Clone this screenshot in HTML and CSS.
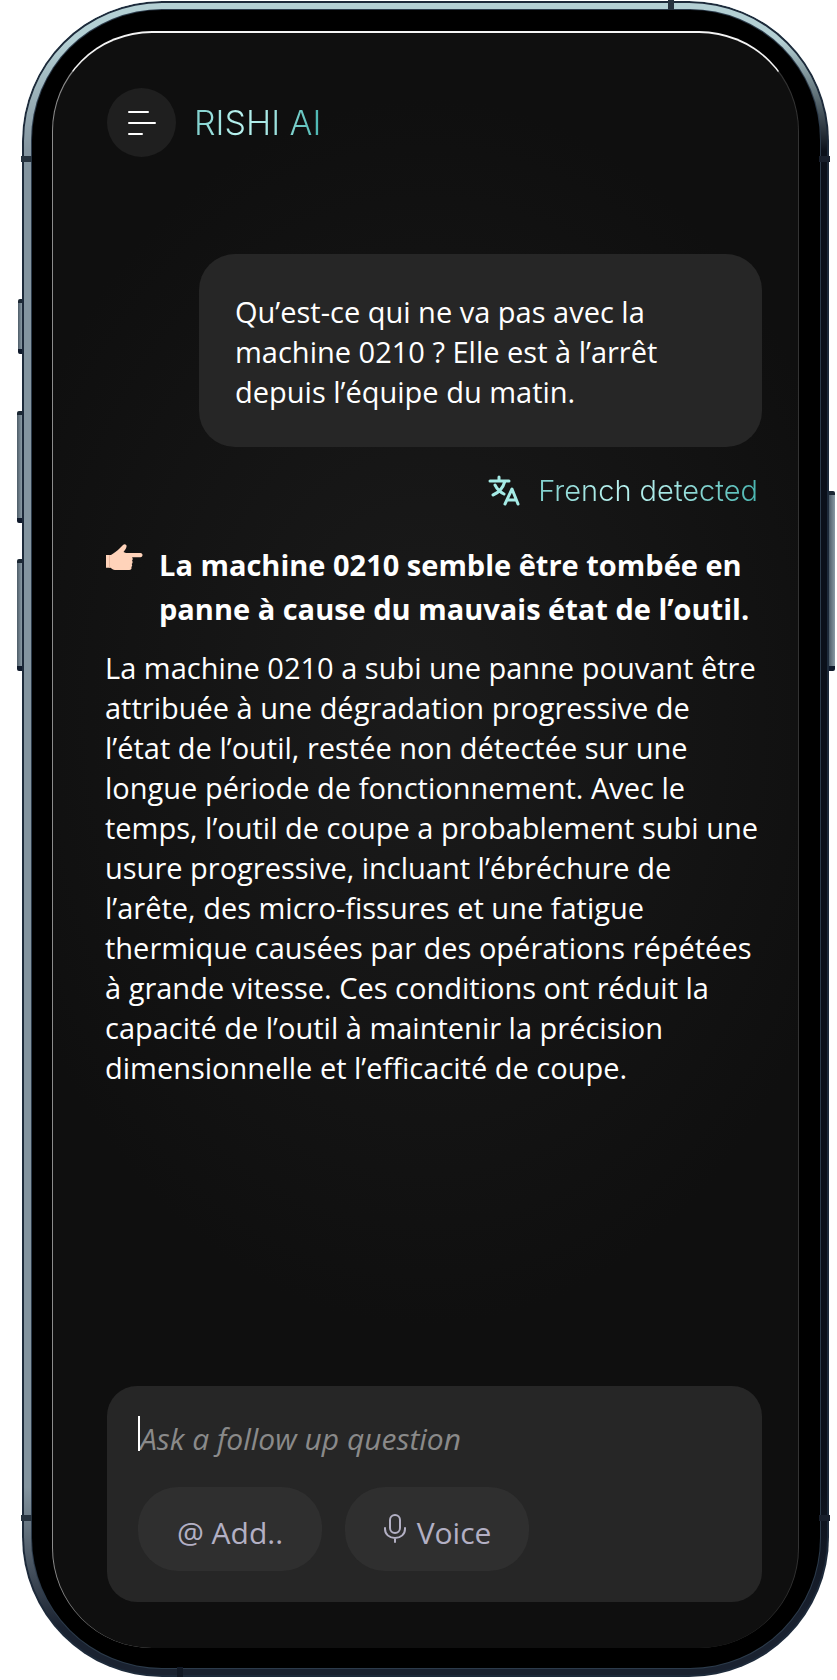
FILE: index.html
```html
<!DOCTYPE html>
<html lang="fr">
<head>
    <meta charset="UTF-8">
    <meta name="viewport" content="width=device-width, initial-scale=1.0">
    <title>Rishi AI</title>
    <link rel="stylesheet" href="styles.css">
</head>
<body>
    <div class="phone">
        <span class="key key-mute"></span>
        <span class="key key-up"></span>
        <span class="key key-down"></span>
        <span class="key key-power"></span>
        <span class="band band-top"></span>
        <span class="band band-bottom"></span>
        <span class="band band-left-top"></span>
        <span class="band band-left-bottom"></span>
        <span class="band band-right-top"></span>
        <span class="band band-right-bottom"></span>

        <div class="bezel">
            <div class="screen">
                <header class="header">
                    <button class="menu-btn" type="button" aria-label="Menu">
                        <svg width="28" height="26" viewBox="0 0 28 26" fill="none" stroke="#fff" stroke-width="2" stroke-linecap="round">
                            <path d="M1 2h19M1 13h26M1 24h13"/>
                        </svg>
                    </button>
                    <h1 class="brand">RISHI AI</h1>
                </header>

                <main class="chat">
                    <p class="question">Qu’est-ce qui ne va pas avec la machine 0210 ? Elle est à l’arrêt depuis l’équipe du matin.</p>

                    <div class="detected">
                        <svg width="32" height="32" viewBox="0 0 32 32" fill="none" stroke="#a5ebe6" stroke-width="3" stroke-linecap="round" stroke-linejoin="round">
                            <path d="M2 6h19M11 2v4M17 6C15 13 10 18 5 20M7 10c2 4 5 7 9 9"/>
                            <path d="M17 29l7-15 6 15M19 25h9"/>
                        </svg>
                        <span class="detected-text">French detected</span>
                    </div>

                    <div class="answer-head">
                        <svg class="hand" width="38" height="27" viewBox="0 0 38 27">
                            <path fill="#ffd3ba" d="M1 11h5C9 9 12 7 14 5L18 1c1.500-1.500 4-.5 3.500 1.800-.4 2-1.700 3.700-3 5.200L21 9h14.500c2.700 0 2.700 4.200 0 4.200H27c1 1 .9 2.500 0 3.400.9 1 .8 2.500-.3 3.400.8 1 .6 2.200-.4 3 .8 1.500-.3 3-2 3H10c-2 0-3-1.500-4.500-2.300H1z"/>
                            <path d="M4.500 11v12.500" stroke="#e9b79c" stroke-width="1"/>
                        </svg>
                        <h2 class="answer-title">La machine 0210 semble être tombée en panne à cause du mauvais état de l’outil.</h2>
                    </div>
                    <p class="answer">La machine 0210 a subi une panne pouvant être attribuée à une dégradation progressive de l’état de l’outil, restée non détectée sur une longue période de fonctionnement. Avec le temps, l’outil de coupe a probablement subi une usure progressive, incluant l’ébréchure de l’arête, des micro-fissures et une fatigue thermique causées par des opérations répétées à grande vitesse. Ces conditions ont réduit la capacité de l’outil à maintenir la précision dimensionnelle et l’efficacité de coupe.</p>
                </main>

                <form class="composer">
                    <div class="field">
                        <span class="caret"></span>
                        <input class="ask" type="text" placeholder="Ask a follow up question" aria-label="Ask a follow up question">
                    </div>
                    <div class="actions">
                        <button class="pill" type="button">@ Add..</button>
                        <button class="pill" type="button">
                            <svg class="mic" width="24" height="32" viewBox="0 0 24 32" fill="none" stroke="#b3b0c4" stroke-width="2" stroke-linecap="round">
                                <rect x="7" y="2" width="10" height="18" rx="5"/>
                                <path d="M2 15v1c0 5 4 9 10 9s10-4 10-9v-1M12 25v4"/>
                            </svg>
                            Voice
                        </button>
                    </div>
                </form>
            </div>
        </div>
    </div>
</body>
</html>
```

FILE: styles.css
```css
*{
    box-sizing: border-box;
}
body{
    margin: 0;
    padding: 1px 8px 3px 22px;
    background-color: white;
    color: white;
    font-family: "Open Sans", "Noto Sans", sans-serif;
    font-size: 29px;
    line-height: 40px;
}
h1, h2, p{
    margin: 0;
}
button, input{
    font: inherit;
    border: none;
    padding: 0;
}

/* phone body */
.phone{
    position: relative;
    display: flex;
    min-height: calc(100vh - 4px);
    padding: 9px 9px 9px 10px;
    border-radius: 140px;
    background: linear-gradient(to bottom, #b4d0d4 0, #b4d0d4 40px, transparent 150px),
                linear-gradient(to top, #1a2230 0, #1a2230 50px, transparent 190px),
                linear-gradient(to right, #83949f 0, #83949f 10px, #0b101a 70%);
    box-shadow: inset 0 0 0 2px #1d2a3a;
}
.bezel{
    display: flex;
    flex: 1;
    padding: 21px 21px 20px 20px;
    border-radius: 130px;
    background-color: black;
    box-shadow: 0 0 0 1px #2c3b4b;
}
.screen{
    display: flex;
    flex-direction: column;
    flex: 1;
    padding: 55px 36px 46px 54px;
    border-top: 2px solid #f4f4f4;
    border-left: 1px solid #8c8c8c;
    border-right: 1px solid #333;
    border-radius: 100px;
    background: radial-gradient(ellipse 60% 38% at 50% 42%, #1b1b1b, #0f0f0f) #0f0f0f;
    background-clip: padding-box;
}

/* side keys and antenna bands */
.key{
    position: absolute;
    left: -5px;
    width: 5px;
    border-top: 4px solid #1b2733;
    border-bottom: 5px solid #101a2b;
    border-radius: 2px 0 0 2px;
    background: linear-gradient(to right, #4d5c68, #8b9ba5);
}
.key-mute{
    top: 298px;
    left: -4px;
    width: 4px;
    height: 55px;
}
.key-up{
    top: 410px;
    height: 112px;
}
.key-down{
    top: 558px;
    height: 112px;
}
.key-power{
    top: 490px;
    left: auto;
    right: -6px;
    width: 6px;
    height: 180px;
    border-radius: 0 2px 2px 0;
}
.band{
    position: absolute;
    width: 11px;
    height: 6px;
    background-color: #26323e;
}
.band-top, .band-bottom{
    width: 6px;
    height: 10px;
}
.band-top{
    top: -1px;
    right: 155px;
}
.band-bottom{
    bottom: 0;
    left: 155px;
    background-color: #111824;
}
.band-left-top, .band-left-bottom{
    left: -1px;
}
.band-right-top, .band-right-bottom{
    right: -1px;
    background-color: #181f2c;
}
.band-left-top, .band-right-top{
    top: 155px;
}
.band-left-bottom, .band-right-bottom{
    bottom: 156px;
}

/* header */
.header{
    display: flex;
    align-items: center;
    gap: 18px;
}
.menu-btn{
    display: flex;
    align-items: center;
    justify-content: center;
    width: 69px;
    height: 69px;
    border-radius: 50%;
    background-color: #1f1f1f;
}
.brand, .detected-text{
    font-family: Inter, "Open Sans", sans-serif;
    font-weight: 300;
    background: linear-gradient(to right, #7fcfcc, #b9f3f0 35%, #a5e6e3 60%, #49b5b0);
    background-clip: text;
    -webkit-background-clip: text;
    color: transparent;
}
.brand{
    font-size: 34px;
}

/* conversation */
.chat{
    display: flex;
    flex-direction: column;
    margin-left: -2px;
    padding-top: 97px;
}
.question{
    align-self: flex-end;
    max-width: 563px;
    padding: 38px 76px 35px 36px;
    border-radius: 36px;
    background-color: #262626;
}
.detected{
    display: flex;
    align-items: center;
    justify-content: flex-end;
    gap: 18px;
    margin-top: 27px;
    padding-right: 4px;
}
.detected-text{
    font-size: 29px;
    line-height: 34px;
}
.answer-head{
    display: flex;
    gap: 16px;
    margin-top: 35px;
}
.hand{
    flex: none;
    margin-top: 1px;
}
.answer-title{
    font-size: 29px;
    font-weight: 700;
    line-height: 44px;
}
.answer{
    margin-top: 17px;
}

/* question box */
.composer{
    margin-top: auto;
    padding: 30px 30px 31px 31px;
    border-radius: 30px;
    background-color: #262626;
    font-size: 30px;
}
.field{
    display: flex;
}
.caret{
    width: 2px;
    height: 35px;
    background-color: white;
}
.ask{
    flex: 1;
    min-width: 0;
    height: 44px;
    background: none;
    color: white;
    outline: none;
}
.ask::placeholder{
    color: #8a8a8a;
    font-style: italic;
    opacity: 1;
}
.actions{
    display: flex;
    gap: 23px;
    margin-top: 27px;
}
.pill{
    display: flex;
    align-items: center;
    justify-content: center;
    gap: 10px;
    width: 184px;
    height: 84px;
    padding-top: 8px;
    border-radius: 40px;
    background-color: #2f2f2f;
    color: #b3b0c4;
}
.mic{
    margin-bottom: 8px;
}
```
